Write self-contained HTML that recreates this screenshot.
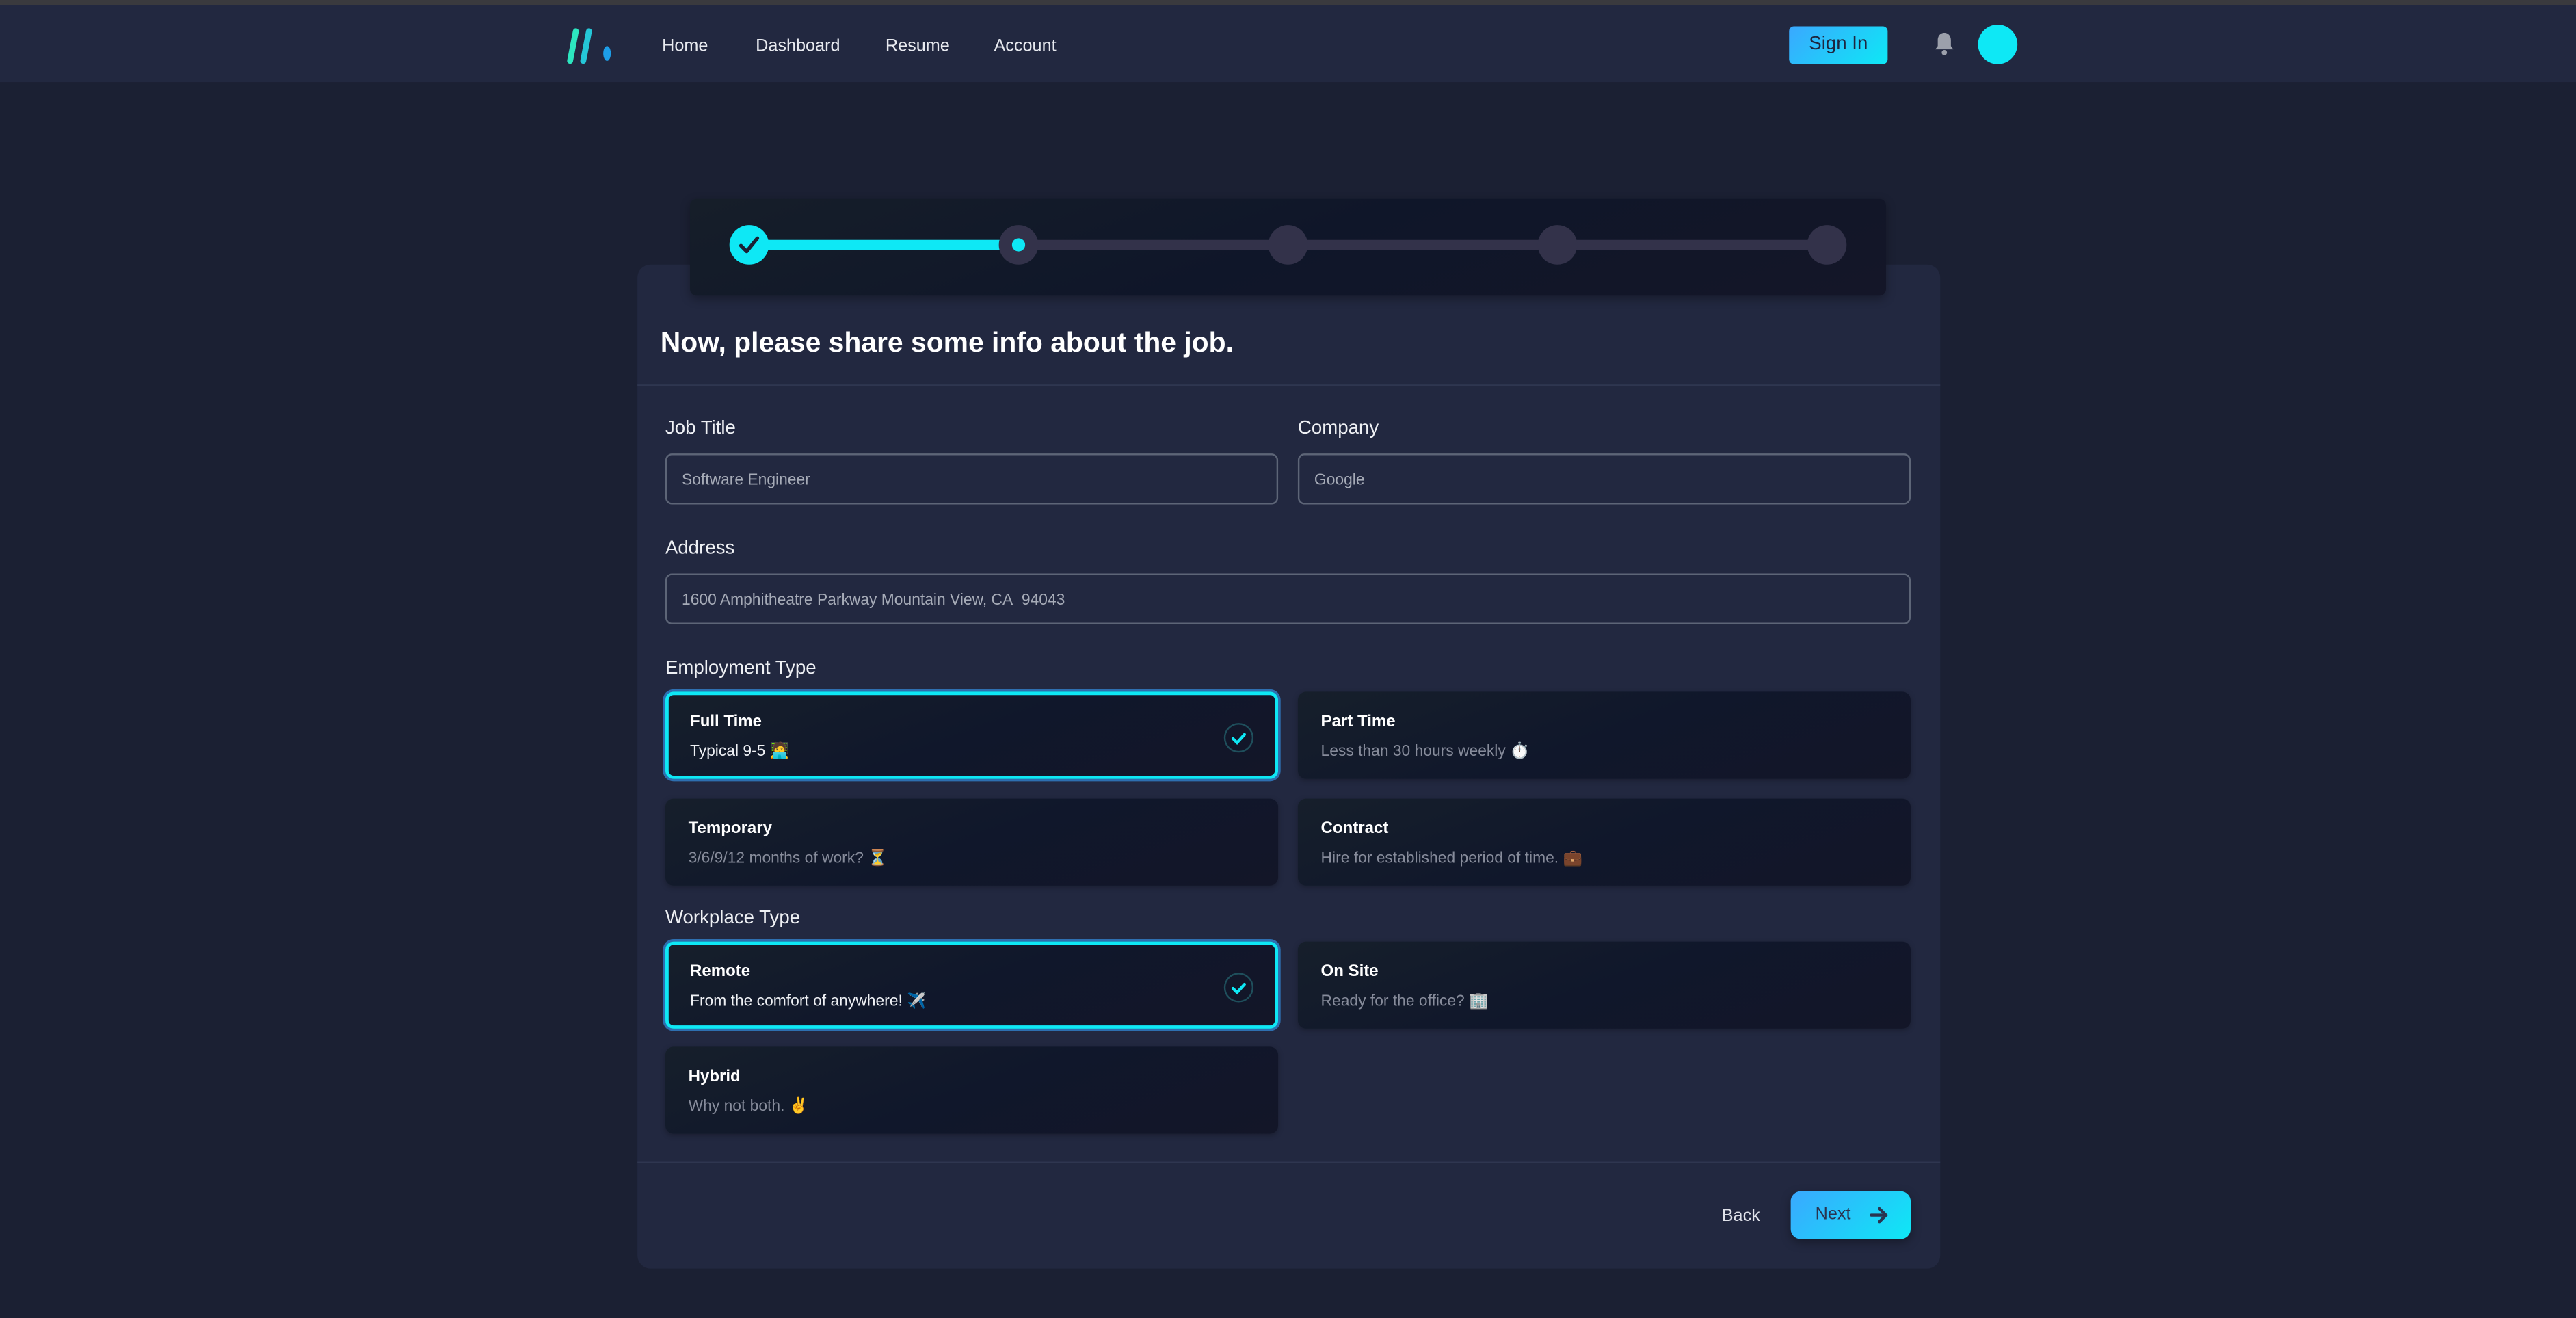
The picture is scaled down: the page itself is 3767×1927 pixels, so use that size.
<!DOCTYPE html>
<html><head><meta charset="utf-8"><style>
*{box-sizing:border-box;margin:0;padding:0}
html,body{width:3767px;height:1927px;overflow:hidden;background:#1b2033}
#w{position:absolute;left:0;top:0;width:1568px;height:802px;transform:scale(2.40242);transform-origin:0 0;font-family:"Liberation Sans",sans-serif;color:#e6e8ee}
.a{position:absolute}
.nav{left:0;top:0;width:1568px;height:50px;background:#222840}
.strip{left:0;top:0;width:1568px;height:3px;background:#3a3a3e}
.nl{top:22px;font-size:10.5px;color:#e8eaf0}
.card{left:388px;top:161px;width:793px;height:611px;background:#222840;border-radius:8px}
.step{left:420px;top:121px;width:728px;height:59px;border-radius:4px;background:linear-gradient(160deg,#161e29,#0f1629 50%,#141628);box-shadow:0 2px 6px rgba(0,0,0,.3)}
.c{width:24px;height:24px;border-radius:50%;background:#33324a;top:137px}
.lab{font-size:11.5px;color:#eef0f4}
.inp{height:31px;border:1px solid #5d6577;border-radius:4px;font-size:9.5px;color:#a6abb7;padding-left:9px;line-height:31px;background:#222840}
.opt{width:373px;height:53px;border-radius:5px;background:linear-gradient(160deg,#161f2b,#10172b 50%,#131628);padding:13px 0 0 14px;box-shadow:0 1px 3px rgba(0,0,0,.25)}
.opt b{display:block;font-size:10px;color:#fff;margin-bottom:2px}
.opt span{font-size:9.5px;color:#878c9b}
.sel{border:2px solid #0ee8f5;box-shadow:0 0 0 1.5px #2e6fb0;padding:11px 0 0 13px}
.sel span{color:#eef0f4}
.ck{position:absolute;right:13px;top:17px;width:18px;height:18px;border-radius:50%;border:1px solid #1f4f5c}
</style></head><body><div id="w">
<div class="a nav"></div><div class="a strip"></div>
<svg class="a" style="left:342px;top:16px" width="34" height="24"><line x1="5" y1="21" x2="8.5" y2="3" stroke="#2de6c0" stroke-width="3.6" stroke-linecap="round"/><line x1="13" y1="21" x2="16.5" y2="3" stroke="#25c7d8" stroke-width="3.6" stroke-linecap="round"/><ellipse cx="27.5" cy="16.5" rx="2.3" ry="4.5" fill="#1d9ee8"/></svg>
<div class="a nl" style="left:403px">Home</div>
<div class="a nl" style="left:460px">Dashboard</div>
<div class="a nl" style="left:539px">Resume</div>
<div class="a nl" style="left:605px">Account</div>
<div class="a" style="left:1089px;top:16px;width:60px;height:23px;border-radius:3px;background:linear-gradient(135deg,#3aa8ff,#0ee8f5);color:#1e2640;font-size:11.5px;text-align:center;line-height:23px">Sign In</div>
<svg class="a" style="left:1177px;top:19px" width="13" height="16"><path d="M6.5 1c-2.5 0-4 2-4 4.5v3.5L1 11h11L10.5 9V5.5C10.5 3 9 1 6.5 1z" fill="#9ca0ab"/><circle cx="6.5" cy="13" r="1.6" fill="#9ca0ab"/></svg>
<div class="a" style="left:1204px;top:15px;width:24px;height:24px;border-radius:50%;background:#0ee8f5"></div>

<div class="a card"></div>
<div class="a step"></div>
<div class="a" style="left:456px;top:146px;width:656px;height:6px;background:#33324a"></div>
<div class="a" style="left:456px;top:146px;width:164px;height:6px;background:#0ee8f5"></div>
<div class="a c" style="left:444px;background:#0ee8f5"></div>
<svg class="a" style="left:444px;top:137px" width="24" height="24"><path d="M7 12.5l3.5 3.5L17 8" stroke="#1b2033" stroke-width="2.2" fill="none" stroke-linecap="round" stroke-linejoin="round"/></svg>
<div class="a c" style="left:608px"></div>
<div class="a" style="left:616px;top:145px;width:8px;height:8px;border-radius:50%;background:#0ee8f5"></div>
<div class="a c" style="left:772px"></div>
<div class="a c" style="left:936px"></div>
<div class="a c" style="left:1100px"></div>

<div class="a" style="left:402px;top:199px;font-size:17px;font-weight:bold;color:#fff">Now, please share some info about the job.</div>
<div class="a" style="left:388px;top:234px;width:793px;height:1px;background:#2f3650"></div>

<div class="a lab" style="left:405px;top:255px">Job Title</div>
<div class="a lab" style="left:790px;top:255px">Company</div>
<div class="a inp" style="left:405px;top:276px;width:373px">Software Engineer</div>
<div class="a inp" style="left:790px;top:276px;width:373px">Google</div>
<div class="a lab" style="left:405px;top:328px">Address</div>
<div class="a inp" style="left:405px;top:349px;width:758px">1600 Amphitheatre Parkway Mountain View, CA&nbsp; 94043</div>

<div class="a lab" style="left:405px;top:401px">Employment Type</div>
<div class="a opt sel" style="left:405px;top:421px"><b>Full Time</b><span>Typical 9-5 🧑‍💻</span><div class="ck"><svg width="16" height="16"><path d="M4.5 8.5l2.5 2.5 4.5-5" stroke="#0ee8f5" stroke-width="1.8" fill="none" stroke-linecap="round"/></svg></div></div>
<div class="a opt" style="left:790px;top:421px"><b>Part Time</b><span>Less than 30 hours weekly ⏱️</span></div>
<div class="a opt" style="left:405px;top:486px"><b>Temporary</b><span>3/6/9/12 months of work? ⏳</span></div>
<div class="a opt" style="left:790px;top:486px"><b>Contract</b><span>Hire for established period of time. 💼</span></div>

<div class="a lab" style="left:405px;top:553px">Workplace Type</div>
<div class="a opt sel" style="left:405px;top:573px"><b>Remote</b><span>From the comfort of anywhere! ✈️</span><div class="ck"><svg width="16" height="16"><path d="M4.5 8.5l2.5 2.5 4.5-5" stroke="#0ee8f5" stroke-width="1.8" fill="none" stroke-linecap="round"/></svg></div></div>
<div class="a opt" style="left:790px;top:573px"><b>On Site</b><span>Ready for the office? 🏢</span></div>
<div class="a opt" style="left:405px;top:637px"><b>Hybrid</b><span>Why not both. ✌️</span></div>

<div class="a" style="left:388px;top:707px;width:793px;height:1px;background:#2f3650"></div>
<div class="a" style="left:1048px;top:734px;font-size:10.5px;color:#e0e2ea">Back</div>
<div class="a" style="left:1090px;top:725px;width:73px;height:29px;border-radius:6px;background:linear-gradient(135deg,#3aa8ff,#0ee8f5);box-shadow:0 2px 6px rgba(0,0,0,.35);color:#2a3450;font-size:10.5px;line-height:29px;padding-left:15px">Next<svg style="position:absolute;left:48px;top:9px" width="12" height="11"><path d="M1 5.5h9M6 1.5l4 4-4 4" stroke="#2a3450" stroke-width="1.8" fill="none" stroke-linecap="round"/></svg></div>
</div></body></html>
